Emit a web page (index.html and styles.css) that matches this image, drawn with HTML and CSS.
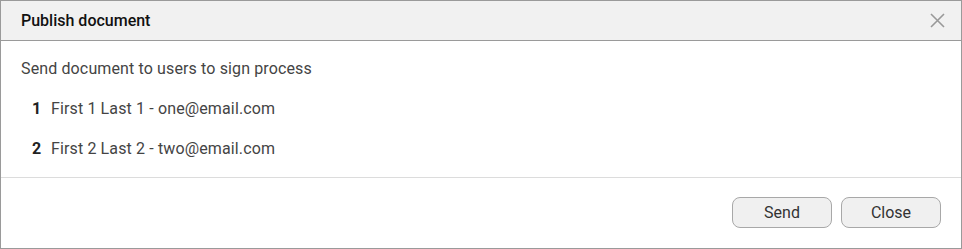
FILE: index.html
```html
<!DOCTYPE html>
<html>
<head>
<meta charset="utf-8">
<link rel="stylesheet" href="styles.css">
</head>
<body>
<div class="dialog">
  <div class="header">
    <span class="title">Publish document</span>
    <button class="close-x" aria-label="Close">
      <svg width="15" height="15" viewBox="0 0 15 15"><path d="M1 1L14 14M14 1L1 14" stroke="#999" stroke-width="1.6" fill="none"/></svg>
    </button>
  </div>
  <div class="content">
    <div class="intro">Send document to users to sign process</div>
    <div class="row"><span class="num">1</span><span>First 1 Last 1 - one@email.com</span></div>
    <div class="row"><span class="num">2</span><span>First 2 Last 2 - two@email.com</span></div>
  </div>
  <div class="footer">
    <button class="btn">Send</button>
    <button class="btn">Close</button>
  </div>
</div>
</body>
</html>
```
FILE: styles.css
```css
html, body {
  margin: 0;
  padding: 0;
  background: #fff;
}
body {
  font-family: Roboto, "Liberation Sans", sans-serif;
}
.dialog {
  width: 962px;
  height: 249px;
  box-sizing: border-box;
  border: 1px solid #9a9a9a;
  display: flex;
  flex-direction: column;
}
.header {
  height: 39px;
  flex: none;
  background: #f1f1f1;
  border-bottom: 1px solid #9a9a9a;
  display: flex;
  align-items: center;
  justify-content: space-between;
  padding: 0 16px 0 20px;
}
.title {
  font-size: 16px;
  font-weight: 500;
  color: #111;
}
.close-x {
  border: none;
  background: none;
  padding: 0;
  width: 15px;
  height: 15px;
  display: flex;
  cursor: pointer;
}
.content {
  padding: 9px 20px 8px 20px;
  border-bottom: 1px solid #dcdcdc;
  font-size: 16px;
  letter-spacing: 0.13px;
  color: #444;
}
.intro {
  height: 39px;
  line-height: 38px;
}
.row {
  height: 40px;
  line-height: 40px;
  display: flex;
  padding-left: 11px;
}
.num {
  font-weight: 700;
  color: #222;
  width: 19px;
}
.footer {
  flex: 1;
  display: flex;
  justify-content: flex-end;
  align-items: flex-start;
  gap: 9px;
  padding: 19px 20px 0 0;
}
.btn {
  width: 100px;
  height: 31px;
  box-sizing: border-box;
  border: 1px solid #a8a8a8;
  border-radius: 8px;
  background: #f0f0f0;
  font-family: Roboto, "Liberation Sans", sans-serif;
  font-size: 16px;
  color: #333;
  padding: 0;
}
```
